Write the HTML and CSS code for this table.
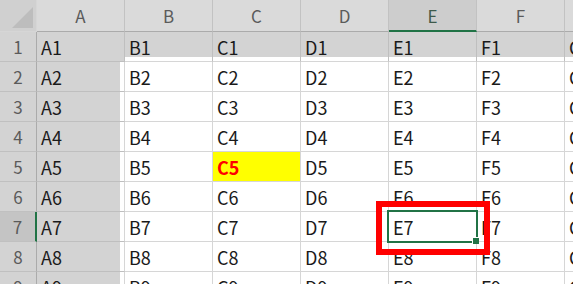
FILE: index.html
```html
<!DOCTYPE html>
<html lang="ja">
  <head>
    <meta charset="UTF-8" />
    <title>Sheet1</title>
    <link rel="stylesheet" href="styles.css">
  </head>
  <body>
    <div class="wrap">
      <div class="sheet">
        <!-- column headers -->
        <div class="corner"><div class="corner-mark"></div></div>
        <div class="col-head">A</div>
        <div class="col-head">B</div>
        <div class="col-head">C</div>
        <div class="col-head">D</div>
        <div class="col-head selected">E</div>
        <div class="col-head">F</div>
        <div class="col-head">G</div>

        <div class="row-head">1</div>
        <div class="cell band">A1</div>
        <div class="cell band-row">B1</div>
        <div class="cell band-row">C1</div>
        <div class="cell band-row">D1</div>
        <div class="cell band-row">E1</div>
        <div class="cell band-row">F1</div>
        <div class="cell band-row">G1</div>

        <div class="row-head">2</div>
        <div class="cell band-col">A2</div>
        <div class="cell">B2</div>
        <div class="cell">C2</div>
        <div class="cell">D2</div>
        <div class="cell">E2</div>
        <div class="cell">F2</div>
        <div class="cell">G2</div>

        <div class="row-head">3</div>
        <div class="cell band-col">A3</div>
        <div class="cell">B3</div>
        <div class="cell">C3</div>
        <div class="cell">D3</div>
        <div class="cell">E3</div>
        <div class="cell">F3</div>
        <div class="cell">G3</div>

        <div class="row-head">4</div>
        <div class="cell band-col">A4</div>
        <div class="cell">B4</div>
        <div class="cell">C4</div>
        <div class="cell">D4</div>
        <div class="cell">E4</div>
        <div class="cell">F4</div>
        <div class="cell">G4</div>

        <div class="row-head">5</div>
        <div class="cell band-col">A5</div>
        <div class="cell">B5</div>
        <div class="cell marked">C5</div>
        <div class="cell">D5</div>
        <div class="cell">E5</div>
        <div class="cell">F5</div>
        <div class="cell">G5</div>

        <div class="row-head">6</div>
        <div class="cell band-col">A6</div>
        <div class="cell">B6</div>
        <div class="cell">C6</div>
        <div class="cell">D6</div>
        <div class="cell">E6</div>
        <div class="cell">F6</div>
        <div class="cell">G6</div>

        <div class="row-head selected">7</div>
        <div class="cell band-col">A7</div>
        <div class="cell">B7</div>
        <div class="cell">C7</div>
        <div class="cell">D7</div>
        <div class="cell active">E7</div>
        <div class="cell">F7</div>
        <div class="cell">G7</div>

        <div class="row-head">8</div>
        <div class="cell band-col">A8</div>
        <div class="cell">B8</div>
        <div class="cell">C8</div>
        <div class="cell">D8</div>
        <div class="cell">E8</div>
        <div class="cell">F8</div>
        <div class="cell">G8</div>

        <div class="row-head">9</div>
        <div class="cell band-col">A9</div>
        <div class="cell">B9</div>
        <div class="cell">C9</div>
        <div class="cell">D9</div>
        <div class="cell">E9</div>
        <div class="cell">F9</div>
        <div class="cell">G9</div>
      </div>

      <!-- red callout around E7 -->
      <div class="callout"></div>
    </div>
  </body>
</html>
```

FILE: styles.css
```css
body {
  margin: 0;
  background: #fff;
  overflow: hidden;
  font-family: "Noto Sans CJK JP", "Noto Sans", sans-serif;
}
.wrap {
  position: relative;
  width: 573px;
  height: 284px;
  overflow: hidden;
}
.sheet {
  display: grid;
  grid-template-columns: 37px repeat(7, 88px);
  grid-template-rows: 32px repeat(9, 30px);
}
.sheet > div {
  box-sizing: border-box;
  border-right: 1px solid #d6d6d6;
  border-bottom: 1px solid #d6d6d6;
}

/* headers */
.corner,
.col-head,
.row-head {
  display: flex;
  align-items: center;
  justify-content: center;
  color: #5b5b5b;
  font-size: 17px;
}
.corner {
  background: #d0d0d0;
  align-items: flex-end;
  justify-content: flex-end;
  padding: 0 3px 3px 0;
}
.corner-mark {
  width: 21px;
  height: 21px;
  background: #bdbdbd;
  clip-path: polygon(100% 0, 100% 100%, 0 100%);
}
.sheet > .col-head {
  background: #dadada;
  border-right-color: #c2c2c2;
  border-bottom-color: #ababab;
}
.sheet > .row-head {
  background: #d3d3d3;
  border-right-color: #ababab;
  border-bottom-color: #c0c0c0;
}
.sheet > .col-head.selected {
  background: #cdcdcd;
  color: #3e5a4b;
  border-bottom: 2px solid #217346;
}
.sheet > .row-head.selected {
  background: #c4c4c4;
  border-right: 2px solid #217346;
}

/* cells */
.cell {
  display: flex;
  align-items: center;
  padding-left: 4px;
  font-size: 18px;
  color: #1a1a1a;
  white-space: nowrap;
  overflow: hidden;
}
.sheet > .band {
  background: #d3d3d3;
  border-color: #bfbfbf;
}
.sheet > .band-row {
  background: linear-gradient(to bottom, #d3d3d3 calc(100% - 4px), #fff 0);
  background-clip: padding-box;
  border-right-color: #bfbfbf;
}
.sheet > .band-col {
  background: linear-gradient(to right, #d3d3d3 calc(100% - 4px), #fff 0);
  background-clip: padding-box;
  border-bottom-color: #bfbfbf;
}
.marked {
  background: #ffff00;
  color: #ff0000;
  font-weight: bold;
}

/* active cell frame and fill handle */
.sheet > .active {
  position: relative;
  overflow: visible;
}
.active::after {
  content: "";
  position: absolute;
  top: -2px;
  left: -2px;
  right: -2px;
  bottom: -2px;
  border: 2px solid #217346;
}
.active::before {
  content: "";
  position: absolute;
  left: 83px;
  top: 25px;
  width: 6px;
  height: 6px;
  background: #217346;
  border-left: 1px solid #fff;
  border-top: 1px solid #fff;
  z-index: 1;
}

.callout {
  position: absolute;
  left: 376px;
  top: 201px;
  width: 114px;
  height: 54px;
  box-sizing: border-box;
  border: 6px solid #ff0000;
  pointer-events: none;
}
```
